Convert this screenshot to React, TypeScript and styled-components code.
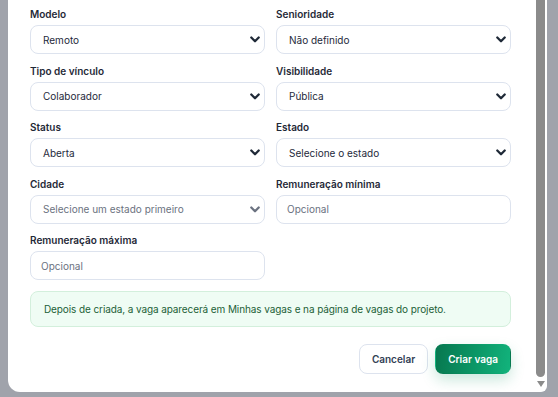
import React from "react";
import styled, { createGlobalStyle } from "styled-components";

const Global = createGlobalStyle`
  html, body { margin: 0; padding: 0; }
  body {
    background: #a0a3ab;
    font-family: Inter, "Noto Sans", "Liberation Sans", sans-serif;
    width: 558px;
    height: 397px;
    overflow: hidden;
  }
`;

const Backdrop = styled.div`
  display: flex;
  padding-left: 8px;
  height: 397px;
  box-sizing: border-box;
`;

const Modal = styled.div`
  width: 539px;
  height: 392px;
  background: #ffffff;
  border-radius: 0 0 6px 12px;
  display: flex;
  overflow: hidden;
`;

const Content = styled.div`
  flex: 1;
  padding: 7px 22px 0 22px;
  display: flex;
  flex-direction: column;
`;

const Grid = styled.div`
  display: grid;
  grid-template-columns: 235px 235px;
  column-gap: 11px;
  row-gap: 9.5px;
`;

const Field = styled.div`
  display: flex;
  flex-direction: column;
`;

const Label = styled.div`
  font-size: 10px;
  font-weight: 600;
  line-height: 15px;
  color: #1f2937;
  margin-bottom: 3px;
`;

const Box = styled.div<{ $disabled?: boolean; $input?: boolean }>`
  height: 29px;
  box-sizing: border-box;
  border: 1px solid #dde3ee;
  border-radius: 8px;
  background: #ffffff;
  display: flex;
  align-items: center;
  justify-content: space-between;
  padding: ${(p) => (p.$input ? "0 10px" : "0 4px 0 12px")};
  font-size: 10px;
  color: ${(p) => (p.$input || p.$disabled ? "#6b7280" : "#1e293b")};
`;

const Chevron = styled.svg<{ $disabled?: boolean }>`
  width: 10px;
  height: 7px;
  color: ${(p) => (p.$disabled ? "#6b7280" : "#1f2937")};
`;

const Info = styled.div`
  margin-top: 11px;
  height: 36px;
  box-sizing: border-box;
  border: 1px solid #d3efdc;
  background: #effcf4;
  border-radius: 8px;
  display: flex;
  align-items: center;
  padding: 0 13px;
  font-size: 10px;
  letter-spacing: -0.1px;
  color: #1c5f37;
`;

const Footer = styled.div`
  margin-top: 17px;
  display: flex;
  justify-content: flex-end;
  gap: 7px;
`;

const Button = styled.button<{ $primary?: boolean }>`
  height: 30px;
  box-sizing: border-box;
  border-radius: 8px;
  font-family: inherit;
  font-size: 10px;
  font-weight: 600;
  padding: 0 12px;
  border: 1px solid ${(p) => (p.$primary ? "transparent" : "#dde3ee")};
  background: ${(p) =>
    p.$primary ? "linear-gradient(100deg, #07774f 0%, #0c9b69 60%, #12b37c 100%)" : "#ffffff"};
  color: ${(p) => (p.$primary ? "#ffffff" : "#334155")};
  box-shadow: ${(p) => (p.$primary ? "0 6px 14px rgba(16, 150, 100, 0.22)" : "none")};
`;

const Track = styled.div`
  width: 14px;
  display: flex;
  flex-direction: column;
  align-items: center;
  padding-left: 1px;
  box-sizing: border-box;
`;

const Thumb = styled.div`
  width: 9px;
  height: 377px;
  background: #8b8b8b;
  border-radius: 0 0 5px 5px;
`;

const Arrow = styled.div`
  margin-top: 4px;
  width: 0;
  height: 0;
  border-left: 4px solid transparent;
  border-right: 4px solid transparent;
  border-top: 6px solid #8b8b8b;
`;

const ChevronIcon = ({ disabled }: { disabled?: boolean }) => (
  <Chevron $disabled={disabled} viewBox="0 0 10 7">
    <path d="M1.3 1.5 L5 5.2 L8.7 1.5" fill="none" stroke="currentColor" strokeWidth="2.3" strokeLinecap="round" strokeLinejoin="round" />
  </Chevron>
);

type F = { label: string; value: string; kind: "select" | "disabled" | "input" };

const fields: F[] = [
  { label: "Modelo", value: "Remoto", kind: "select" },
  { label: "Senioridade", value: "Não definido", kind: "select" },
  { label: "Tipo de vínculo", value: "Colaborador", kind: "select" },
  { label: "Visibilidade", value: "Pública", kind: "select" },
  { label: "Status", value: "Aberta", kind: "select" },
  { label: "Estado", value: "Selecione o estado", kind: "select" },
  { label: "Cidade", value: "Selecione um estado primeiro", kind: "disabled" },
  { label: "Remuneração mínima", value: "Opcional", kind: "input" },
  { label: "Remuneração máxima", value: "Opcional", kind: "input" },
];

export default function App() {
  return (
    <>
      <Global />
      <Backdrop>
        <Modal>
          <Content>
            <Grid>
              {fields.map((f) => (
                <Field key={f.label}>
                  <Label>{f.label}</Label>
                  <Box $disabled={f.kind === "disabled"} $input={f.kind === "input"}>
                    <span>{f.value}</span>
                    {f.kind !== "input" && <ChevronIcon disabled={f.kind === "disabled"} />}
                  </Box>
                </Field>
              ))}
            </Grid>
            <Info>Depois de criada, a vaga aparecerá em Minhas vagas e na página de vagas do projeto.</Info>
            <Footer>
              <Button>Cancelar</Button>
              <Button $primary>Criar vaga</Button>
            </Footer>
          </Content>
          <Track>
            <Thumb />
            <Arrow />
          </Track>
        </Modal>
      </Backdrop>
    </>
  );
}
